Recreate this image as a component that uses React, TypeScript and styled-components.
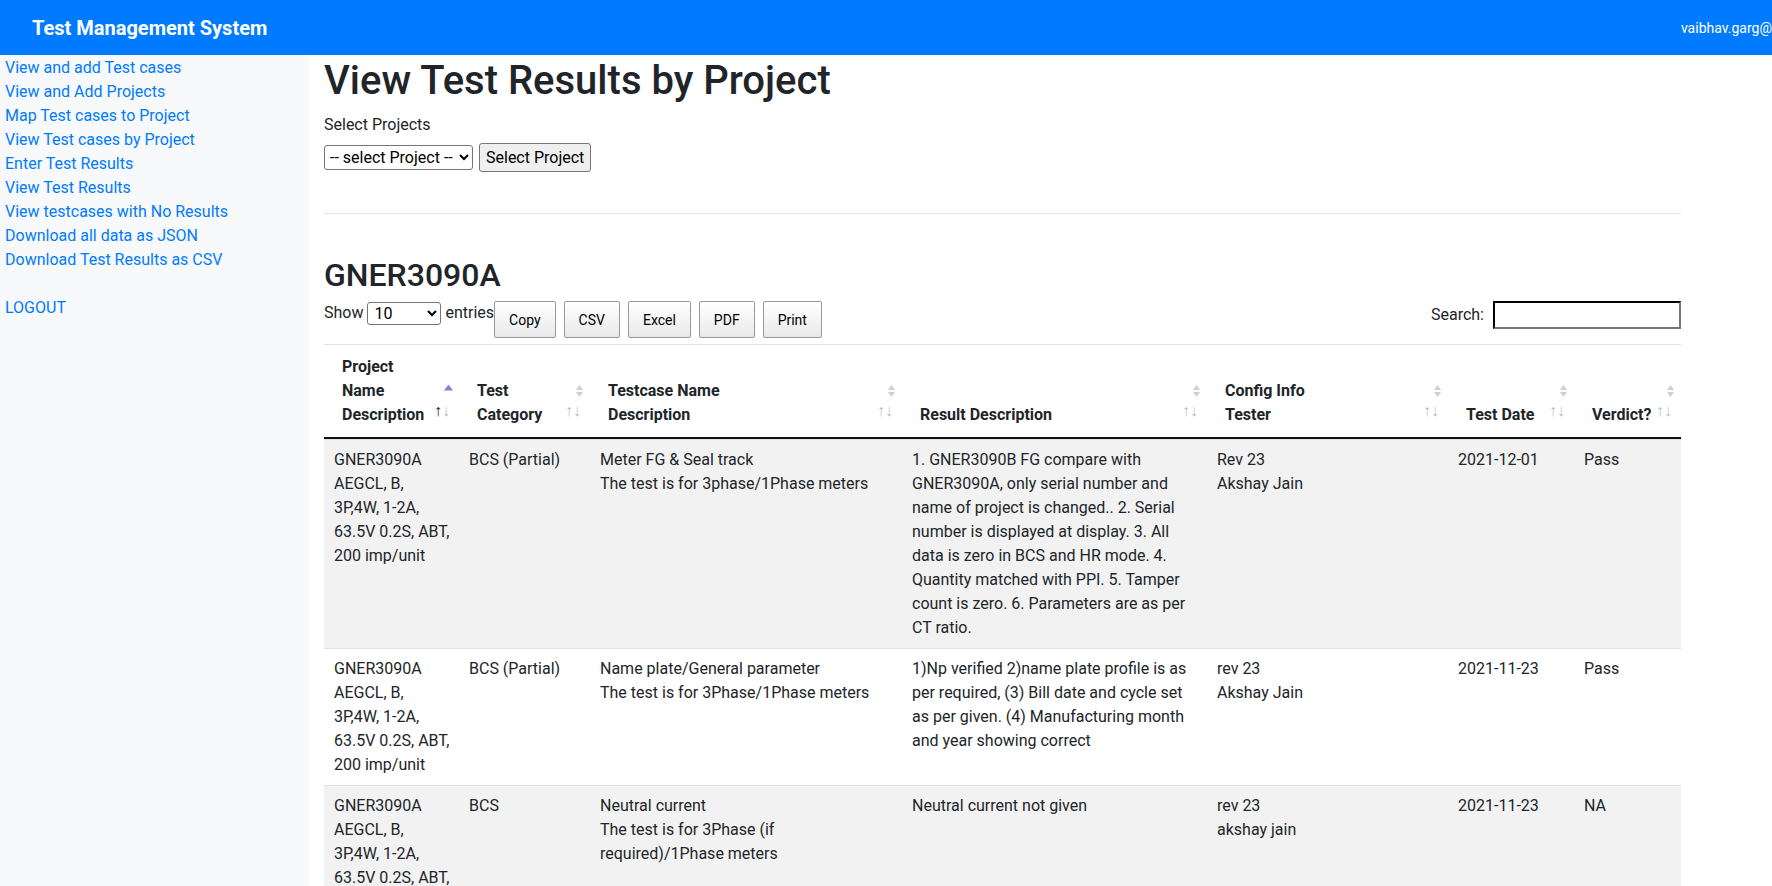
import React from "react";
import styled, { createGlobalStyle } from "styled-components";

const GlobalStyle = createGlobalStyle`
  * {
    box-sizing: border-box;
  }
  body {
    margin: 0;
    font-family: "Segoe UI", Roboto, "Helvetica Neue", Arial, sans-serif;
    font-size: 16px;
    line-height: 24px;
    color: #212529;
    background: #fff;
  }
`;

const TopBar = styled.nav`
  display: flex;
  align-items: center;
  height: 55px;
  padding-left: 32px;
  background: #007bff;
  overflow: hidden;
`;

const Brand = styled.a`
  flex: 1;
  color: #fff;
  font-size: 20px;
  font-weight: 700;
  line-height: 30px;
  text-decoration: none;
`;

const UserName = styled.span`
  flex: 0 0 84px;
  color: #fff;
  font-size: 14px;
  white-space: nowrap;
`;

const Layout = styled.div`
  display: flex;
  min-height: calc(100vh - 55px);
`;

const Sidebar = styled.aside`
  flex: 0 0 309px;
  padding: 1px 0 0 5px;
  background: #f8f9fa;
`;

const SideLink = styled.a`
  display: block;
  color: #007bff;
  text-decoration: none;
`;

const SideGap = styled.div`
  height: 24px;
`;

const Main = styled.main`
  flex: 0 0 1372px;
  padding-left: 15px;
`;

const PageTitle = styled.h1`
  margin: 2px 0 8px;
  font-size: 40px;
  font-weight: 500;
  line-height: 48px;
`;

const FieldLabel = styled.label`
  display: block;
  margin-bottom: 6px;
`;

const ProjectForm = styled.form`
  display: flex;
  align-items: center;
  gap: 6px;
`;

const ProjectSelect = styled.select`
  width: 149px;
  height: 25px;
  padding: 0 1px;
  font: inherit;
  line-height: 20px;
  color: #000;
  background: #fff;
  border: 1px solid #767676;
  border-radius: 3px;
`;

const PlainButton = styled.button`
  height: 29px;
  padding: 0 6px;
  font: inherit;
  color: #000;
  background: #efefef;
  border: 1px solid #767676;
  border-radius: 3px;
`;

const Divider = styled.hr`
  margin: 41px 0 0;
  border: 0;
  border-top: 1px solid rgba(0, 0, 0, 0.1);
`;

const ProjectTitle = styled.h2`
  margin: 42px 0 7px;
  font-size: 32px;
  font-weight: 500;
  line-height: 38px;
`;

const Controls = styled.div`
  display: flex;
  align-items: flex-start;
  margin-bottom: 6px;
`;

const LengthGroup = styled.label`
  display: flex;
  align-items: center;
  gap: 4px;
  height: 24px;
`;

const LengthSelect = styled.select`
  width: 74px;
  height: 23px;
  padding: 0 2px;
  font: inherit;
  line-height: 20px;
  color: #000;
  background: #fff;
  border: 1px solid #767676;
  border-radius: 3px;
`;

const ExportButtons = styled.div`
  display: flex;
  gap: 8px;
  flex: 1;
`;

const ExportButton = styled.button`
  height: 37px;
  padding: 0 14px;
  font-family: inherit;
  font-size: 14px;
  color: #000;
  background: linear-gradient(to bottom, #ffffff 0%, #e9e9e9 100%);
  border: 1px solid #999;
  border-radius: 2px;
`;

const SearchGroup = styled.label`
  display: flex;
  align-items: center;
  gap: 9px;
  height: 28px;
`;

const SearchInput = styled.input`
  width: 188px;
  height: 28px;
  padding: 1px 2px;
  font: inherit;
  border: 2px inset #767676;
  border-top-color: #1a1a1a;
  border-left-color: #1a1a1a;
`;

const Table = styled.table`
  width: 100%;
  table-layout: fixed;
  border-collapse: separate;
  border-spacing: 0;
`;

const Th = styled.th`
  position: relative;
  padding: 10px 30px 10px 18px;
  text-align: left;
  vertical-align: bottom;
  font-weight: 700;
  white-space: nowrap;
  border-top: 1px solid #dee2e6;
  border-bottom: 2px solid #111;
`;

const Tr = styled.tr<{ $striped: boolean }>`
  background: ${(p) => (p.$striped ? "#f2f2f2" : "#fff")};
`;

const Td = styled.td<{ $nowrap?: boolean }>`
  padding: 8px 10px;
  vertical-align: top;
  white-space: ${(p) => (p.$nowrap ? "nowrap" : "normal")};
  border-top: 1px solid #dee2e6;
`;

const Triangles = styled.svg`
  position: absolute;
  right: 6px;
  top: 50%;
  transform: translateY(-50%);
`;

const Arrow = styled.span<{ $right: number; $on: boolean }>`
  position: absolute;
  right: ${(p) => p.$right}px;
  bottom: 14px;
  font-family: "Liberation Sans", Arial, sans-serif;
  font-weight: 400;
  line-height: 24px;
  opacity: ${(p) => (p.$on ? 1 : 0.3)};
`;

const SortMark = ({ sorted }: { sorted?: boolean }) => (
  <>
    <Triangles width="9" height="13" viewBox="0 0 9 13">
      {sorted ? (
        <path d="M0 6 L4.5 0 L9 6 Z" fill="#8282e0" />
      ) : (
        <>
          <path d="M1 5.5 L4.5 0.5 L8 5.5 Z" fill="#cfcfcf" />
          <path d="M1 7.5 L4.5 12.5 L8 7.5 Z" fill="#cfcfcf" />
        </>
      )}
    </Triangles>
    <Arrow $right={17} $on={!!sorted}>↑</Arrow>
    <Arrow $right={9} $on={false}>↓</Arrow>
  </>
);

const sideLinks = [
  "View and add Test cases",
  "View and Add Projects",
  "Map Test cases to Project",
  "View Test cases by Project",
  "Enter Test Results",
  "View Test Results",
  "View testcases with No Results",
  "Download all data as JSON",
  "Download Test Results as CSV",
];

const columns = [
  { lines: ["Project", "Name", "Description"], width: 135, sorted: true },
  { lines: ["Test", "Category"], width: 131 },
  { lines: ["Testcase Name", "Description"], width: 312 },
  { lines: ["Result Description"], width: 305 },
  { lines: ["Config Info", "Tester"], width: 241 },
  { lines: ["Test Date"], width: 126 },
  { lines: ["Verdict?"], width: 107 },
];

// project name + description, broken the way the narrow first column shows it
const project = ["GNER3090A", "AEGCL, B,", "3P,4W, 1-2A,", "63.5V 0.2S, ABT,", "200 imp/unit"];

const rows: string[][][] = [
  [
    project,
    ["BCS (Partial)"],
    ["Meter FG & Seal track", "The test is for 3phase/1Phase meters"],
    [
      "1. GNER3090B FG compare with GNER3090A, only serial number and name of project is changed.. 2. Serial number is displayed at display. 3. All data is zero in BCS and HR mode. 4. Quantity matched with PPI. 5. Tamper count is zero. 6. Parameters are as per CT ratio.",
    ],
    ["Rev 23", "Akshay Jain"],
    ["2021-12-01"],
    ["Pass"],
  ],
  [
    project,
    ["BCS (Partial)"],
    ["Name plate/General parameter", "The test is for 3Phase/1Phase meters"],
    [
      "1)Np verified 2)name plate profile is as per required, (3) Bill date and cycle set as per given. (4) Manufacturing month and year showing correct",
    ],
    ["rev 23", "Akshay Jain"],
    ["2021-11-23"],
    ["Pass"],
  ],
  [
    project,
    ["BCS"],
    ["Neutral current", "The test is for 3Phase (if required)/1Phase meters"],
    ["Neutral current not given"],
    ["rev 23", "akshay jain"],
    ["2021-11-23"],
    ["NA"],
  ],
];

const Lines = ({ lines }: { lines: string[] }) => (
  <>
    {lines.map((line, i) => (
      <React.Fragment key={i}>
        {i > 0 && <br />}
        {line}
      </React.Fragment>
    ))}
  </>
);

export default function App() {
  return (
    <>
      <GlobalStyle />
      <TopBar>
        <Brand href="#">Test Management System</Brand>
        <UserName>vaibhav.garg@</UserName>
      </TopBar>
      <Layout>
        <Sidebar>
          {sideLinks.map((link) => (
            <SideLink href="#" key={link}>
              {link}
            </SideLink>
          ))}
          <SideGap />
          <SideLink href="#">LOGOUT</SideLink>
        </Sidebar>
        <Main>
          <PageTitle>View Test Results by Project</PageTitle>
          <FieldLabel>Select Projects</FieldLabel>
          <ProjectForm onSubmit={(e) => e.preventDefault()}>
            <ProjectSelect defaultValue="">
              <option value="">-- select Project --</option>
            </ProjectSelect>
            <PlainButton type="submit">Select Project</PlainButton>
          </ProjectForm>
          <Divider />
          <ProjectTitle>GNER3090A</ProjectTitle>
          <Controls>
            <LengthGroup>
              Show
              <LengthSelect defaultValue="10">
                <option>10</option>
                <option>25</option>
                <option>50</option>
                <option>100</option>
              </LengthSelect>
              entries
            </LengthGroup>
            <ExportButtons>
              {["Copy", "CSV", "Excel", "PDF", "Print"].map((b) => (
                <ExportButton key={b}>{b}</ExportButton>
              ))}
            </ExportButtons>
            <SearchGroup>
              Search:
              <SearchInput type="search" />
            </SearchGroup>
          </Controls>
          <Table>
            <colgroup>
              {columns.map((c, i) => (
                <col key={i} style={{ width: c.width }} />
              ))}
            </colgroup>
            <thead>
              <tr>
                {columns.map((c, i) => (
                  <Th key={i}>
                    <Lines lines={c.lines} />
                    <SortMark sorted={c.sorted} />
                  </Th>
                ))}
              </tr>
            </thead>
            <tbody>
              {rows.map((row, r) => (
                <Tr key={r} $striped={r % 2 === 0}>
                  {row.map((cell, i) => (
                    <Td key={i} $nowrap={i === 0}>
                      <Lines lines={cell} />
                    </Td>
                  ))}
                </Tr>
              ))}
            </tbody>
          </Table>
        </Main>
      </Layout>
    </>
  );
}
